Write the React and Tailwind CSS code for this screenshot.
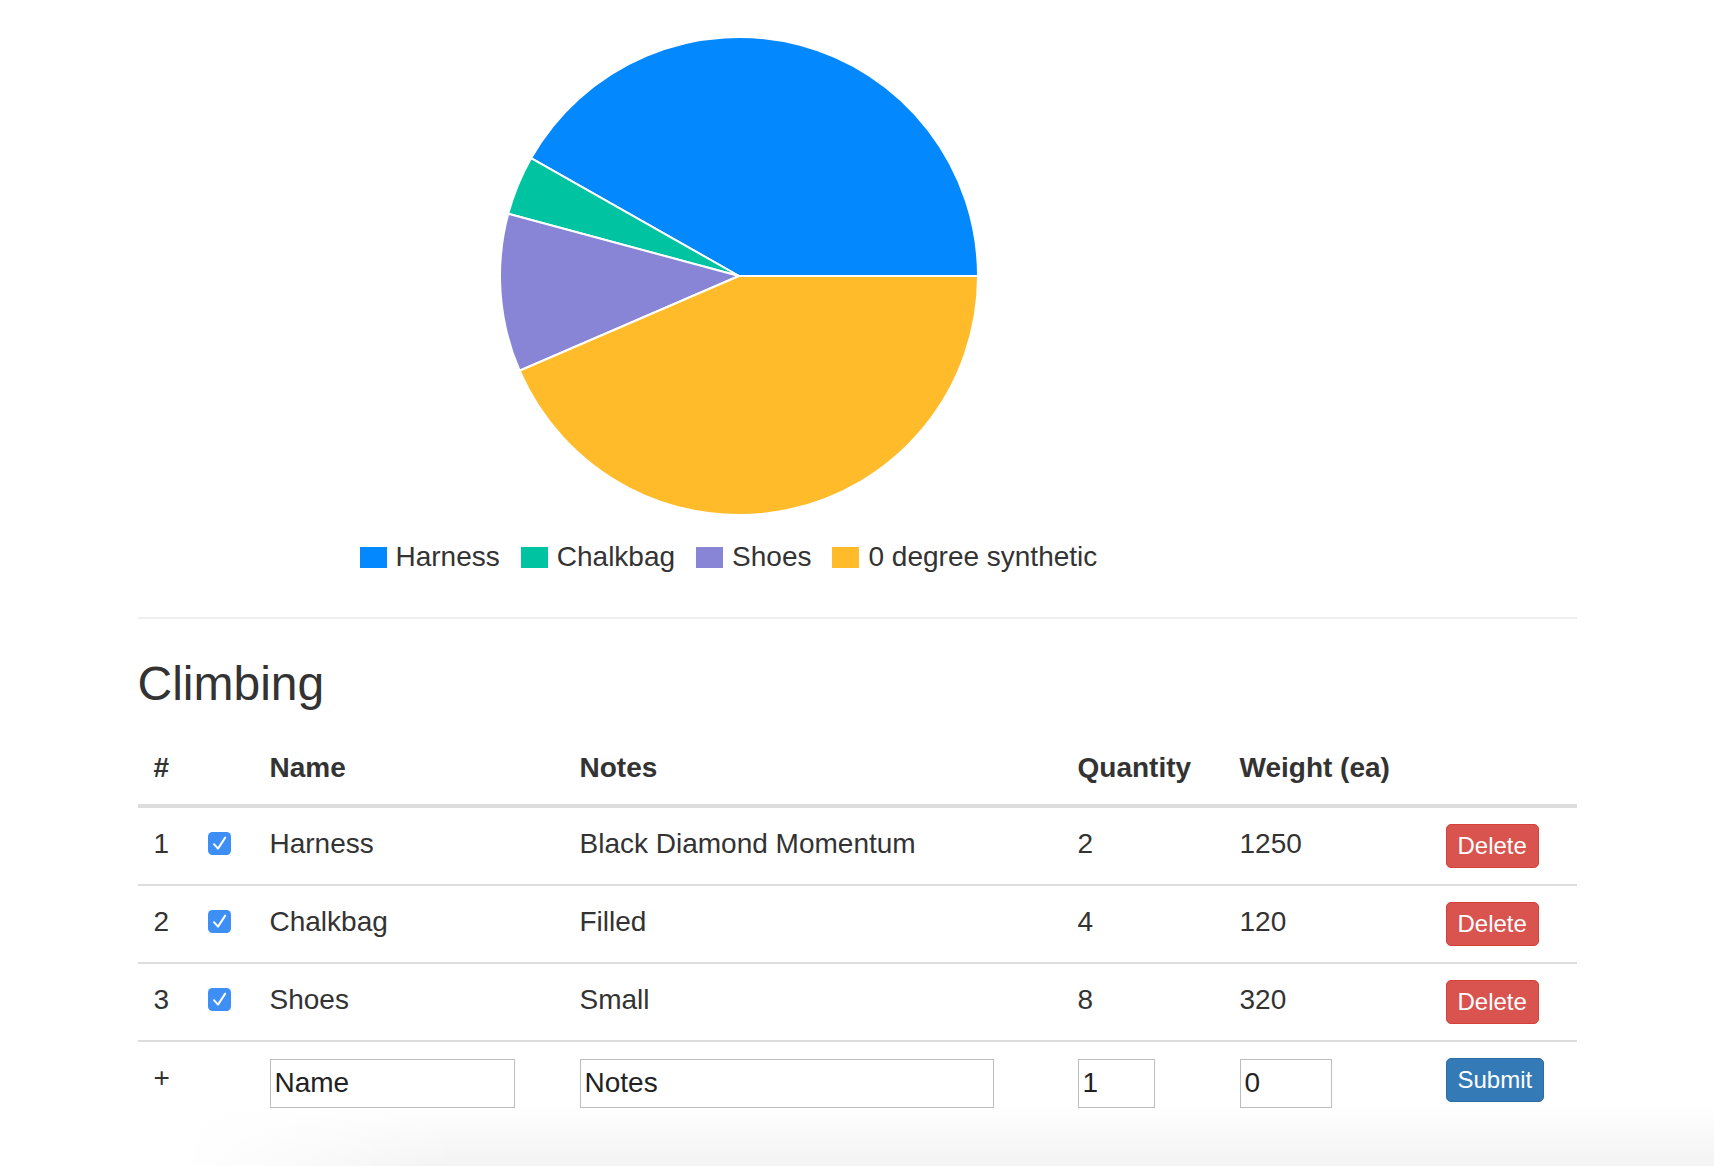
import React from 'react'

const SLICES = [
  { label: 'Harness', color: '#0388fe', from: 209.53, to: 360 },
  { label: 'Chalkbag', color: '#00c4a1', from: 195.08, to: 209.53 },
  { label: 'Shoes', color: '#8985d6', from: 156.64, to: 195.08 },
  { label: '0 degree synthetic', color: '#ffbb29', from: 0, to: 156.64 },
]

const ROWS = [
  { n: 1, name: 'Harness', notes: 'Black Diamond Momentum', qty: 2, weight: 1250 },
  { n: 2, name: 'Chalkbag', notes: 'Filled', qty: 4, weight: 120 },
  { n: 3, name: 'Shoes', notes: 'Small', qty: 8, weight: 320 },
]

const C = 240
const R = 239

function pt(deg) {
  const a = (deg * Math.PI) / 180
  return [C + R * Math.cos(a), C + R * Math.sin(a)]
}

function slicePath(from, to) {
  const [x1, y1] = pt(from)
  const [x2, y2] = pt(to)
  const large = to - from > 180 ? 1 : 0
  return `M${C} ${C} L${x1} ${y1} A${R} ${R} 0 ${large} 1 ${x2} ${y2} Z`
}

function Pie() {
  return (
    <svg width="480" height="480" viewBox="0 0 480 480" className="block">
      {SLICES.map((s) => (
        <path key={s.label} d={slicePath(s.from, s.to)} fill={s.color} stroke="#fff" strokeWidth="2" strokeLinejoin="round" />
      ))}
    </svg>
  )
}

function Legend() {
  return (
    <div className="ml-[222px] mt-[27px] flex h-[28px] items-center gap-[21px] text-[28px] leading-[28px]">
      {SLICES.map((s) => (
        <div key={s.label} className="flex items-center gap-[9px]">
          <span className="block h-[21px] w-[27px]" style={{ backgroundColor: s.color }} />
          <span className="whitespace-nowrap">{s.label}</span>
        </div>
      ))}
    </div>
  )
}

function Check() {
  return (
    <svg width="23" height="23" viewBox="0 0 23 23" className="block">
      <rect x="0" y="0" width="23" height="23" rx="4.5" fill="#3d8ff5" />
      <path d="M6 12.2 L10 16.6 L17.2 5.6" fill="none" stroke="#fff" strokeWidth="2" strokeLinecap="round" strokeLinejoin="round" />
    </svg>
  )
}

function Btn({ tone, children }) {
  const cls =
    tone === 'danger'
      ? 'bg-[#d9534f] border-[#d43f3a]'
      : 'bg-[#337ab7] border-[#2e6da4]'
  return (
    <button className={`flex h-[44px] items-center justify-center rounded-[5px] border px-[11px] text-[24px] leading-none text-white ${cls}`}>
      {children}
    </button>
  )
}

const td = 'px-[16px] py-[16px] align-top'
const field = 'mt-[1px] block h-[49px] border border-[#bdbdbd] bg-white px-[4px] text-[28px] text-[#222] outline-none placeholder:text-[#222]'

export default function App() {
  return (
    <div className="min-h-[1166px] bg-[linear-gradient(to_right,#fff_180px,transparent_460px),linear-gradient(to_bottom,#fff_1105px,#f3f3f3_1166px)] font-['Liberation_Sans',Arial,sans-serif] text-[#333]">
      <div className="mx-auto w-[1439px]">
        <div className="w-[1200px] pt-[36px]">
          <div className="ml-[361px]">
            <Pie />
          </div>
          <Legend />
        </div>

        <div className="mt-[46px] h-[2px] bg-[#eee]" />

        <h3 className="mb-[21px] mt-[39px] text-[48px] font-normal leading-[52.8px]">Climbing</h3>

        <table className="w-[1439px] table-fixed border-collapse text-[28px] leading-[40px]">
          <colgroup>
            <col className="w-[54px]" />
            <col className="w-[62px]" />
            <col className="w-[310px]" />
            <col className="w-[498px]" />
            <col className="w-[162px]" />
            <col className="w-[206px]" />
            <col className="w-[147px]" />
          </colgroup>
          <thead>
            <tr className="border-b-[4px] border-[#ddd] text-left font-bold">
              <th className={td}>#</th>
              <th className={td}></th>
              <th className={td}>Name</th>
              <th className={td}>Notes</th>
              <th className={td}>Quantity</th>
              <th className={td}>Weight (ea)</th>
              <th className={td}></th>
            </tr>
          </thead>
          <tbody>
            {ROWS.map((r) => (
              <tr key={r.n} className="border-b-[2px] border-[#ddd]">
                <td className={td}>{r.n}</td>
                <td className={td}>
                  <div className="flex h-[40px] items-center">
                    <Check />
                  </div>
                </td>
                <td className={td}>{r.name}</td>
                <td className={td}>{r.notes}</td>
                <td className={td}>{r.qty}</td>
                <td className={td}>{r.weight}</td>
                <td className={td}>
                  <Btn tone="danger">Delete</Btn>
                </td>
              </tr>
            ))}
            <tr>
              <td className={td}>+</td>
              <td className={td}></td>
              <td className={td}>
                <input type="text" placeholder="Name" className={`${field} w-[245px]`} />
              </td>
              <td className={td}>
                <input type="text" placeholder="Notes" className={`${field} w-[414px]`} />
              </td>
              <td className={td}>
                <input type="text" defaultValue="1" className={`${field} w-[77px]`} />
              </td>
              <td className={td}>
                <input type="text" defaultValue="0" className={`${field} w-[92px]`} />
              </td>
              <td className={td}>
                <Btn>Submit</Btn>
              </td>
            </tr>
          </tbody>
        </table>
      </div>
    </div>
  )
}
